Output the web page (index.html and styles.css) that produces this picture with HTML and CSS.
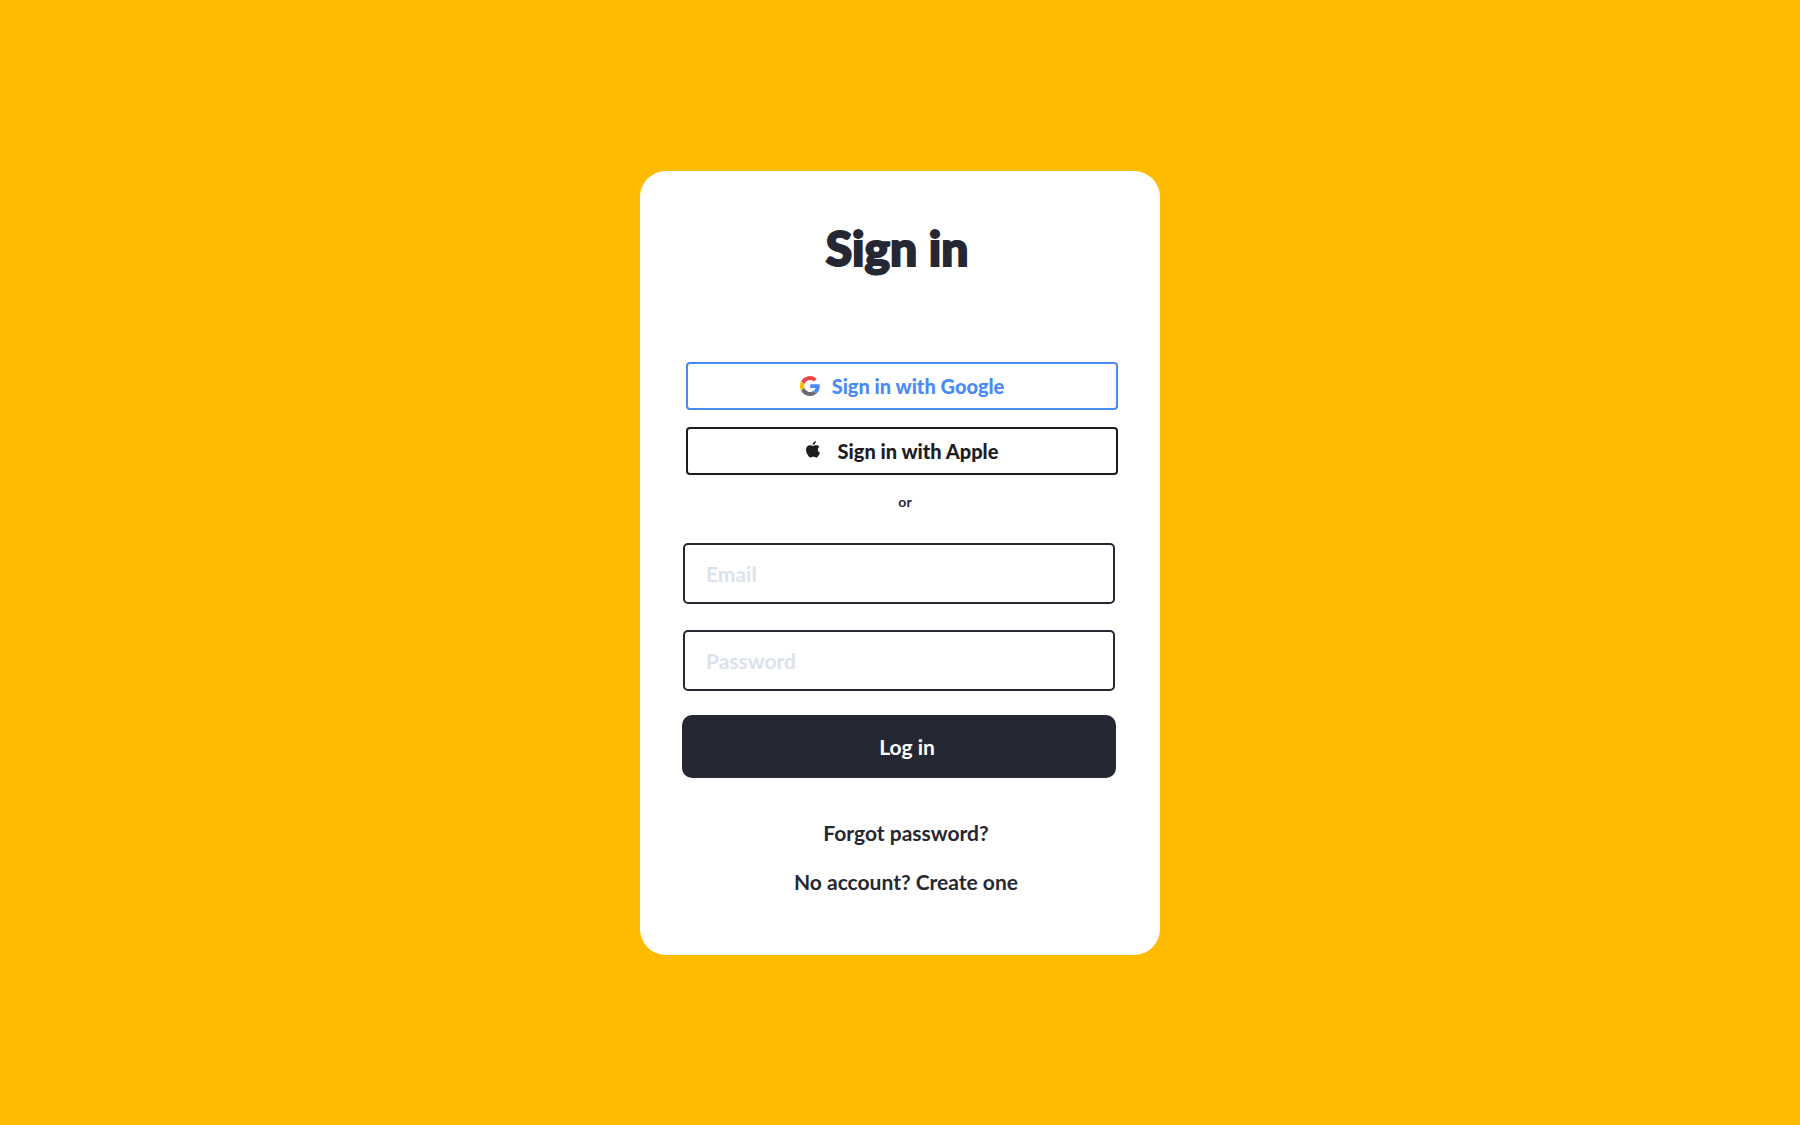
FILE: index.html
```html
<!DOCTYPE html>
<html lang="en">
<head>
  <meta charset="utf-8">
  <meta name="viewport" content="width=device-width, initial-scale=1">
  <title>Sign in</title>
  <link rel="stylesheet" href="styles.css">
</head>
<body>
  <main class="card">
    <h1 class="title">Sign in</h1>
    <div class="social">
      <button type="button" class="provider provider-google">
        <svg class="google-mark" viewBox="0 0 20 20" aria-hidden="true">
          <path fill="#ea4741" d="M1.1 5.5A10 10 0 0 1 16.8 2.7L13.9 5.5A6 6 0 0 0 4.4 8z"/>
          <path fill="#fbbc05" d="M1.1 5.5A10 10 0 0 0 1.1 14.5L4.4 12A6 6 0 0 1 4.4 8z"/>
          <path fill="#686c72" d="M1.1 14.5A10 10 0 0 0 16.6 17.5L13.4 15A6 6 0 0 1 4.4 12z"/>
          <path fill="#4a8af4" d="M10.2 8.2H19.6C20.2 11.8 19.2 15.2 16.6 17.5L13.4 15C14.6 14.2 15.3 13.2 15.5 12H10.2z"/>
        </svg>
        <span>Sign in with Google</span>
      </button>
      <button type="button" class="provider provider-apple">
        <svg class="apple-mark" viewBox="0 0 14 17" aria-hidden="true">
          <path fill="currentColor" d="M9.8 0C9.9 1 9.5 2 8.9 2.7C8.3 3.4 7.5 3.9 6.7 3.8C6.6 2.9 7 2 7.5 1.4C8.1 .6 9 .1 9.8 0zM13.5 5.7C12.5 6.3 11.8 7.2 11.8 8.5C11.8 10.1 12.7 11.1 14 11.6C13.7 12.6 13.2 13.5 12.6 14.4C11.9 15.4 11.2 16.5 10.1 16.5C9 16.5 8.7 15.8 7.4 15.8C6.1 15.8 5.7 16.5 4.7 16.5C3.6 16.5 2.9 15.5 2.1 14.4C.8 12.6 0 10.6 0 8.7C0 5.8 1.9 4.2 3.9 4.2C5.2 4.2 6 4.9 7 4.9C7.8 4.9 9 4.1 10.4 4.2C11.6 4.2 12.8 4.8 13.5 5.7z"/>
        </svg>
        <span>Sign in with Apple</span>
      </button>
      <p class="divider">or</p>
    </div>
    <form class="login">
      <div class="fields">
        <input class="field" type="email" name="email" placeholder="Email" aria-label="Email">
        <input class="field" type="password" name="password" placeholder="Password" aria-label="Password">
      </div>
      <button class="submit" type="submit">Log in</button>
    </form>
    <nav class="links">
      <a href="#forgot">Forgot password?</a>
      <a href="#create">No account? Create one</a>
    </nav>
  </main>
</body>
</html>
```
FILE: styles.css
```css
* {
  box-sizing: border-box;
}

body {
  display: flex;
  align-items: center;
  justify-content: center;
  min-height: 100vh;
  margin: 0;
  padding-top: 1px;
  background: #ffbb00;
  color: #252733;
  font: 700 21px/24px Lato, "Open Sans", sans-serif;
}

.card {
  width: 100%;
  max-width: 520px;
  padding: 47px 45px 61px 43px;
  border-radius: 26px;
  background: #fff;
}

.title {
  margin: 0 4px 84px 0;
  font-size: 48px;
  font-weight: 900;
  line-height: 60px;
  text-align: center;
  -webkit-text-stroke: 2px currentColor;
}

.social {
  display: flex;
  flex-direction: column;
  gap: 17px;
  padding-left: 3px;
  margin-right: -3px;
}

.provider {
  display: flex;
  align-items: center;
  justify-content: center;
  height: 48px;
  padding: 0;
  border: 2px solid currentColor;
  border-radius: 4px;
  background: #fff;
  font: inherit;
  font-size: 20px;
  font-weight: 900;
  cursor: pointer;
}

.provider-google {
  gap: 12px;
  color: #4a8af4;
}

.provider-apple {
  gap: 18px;
  color: #1d1d1f;
}

.google-mark {
  width: 20px;
  height: 20px;
}

.apple-mark {
  width: 14px;
  height: 17px;
  margin-bottom: 3px;
}

.divider {
  margin: 0 0 31px 6px;
  font-size: 14px;
  line-height: 20px;
  text-align: center;
}

.fields {
  display: grid;
  gap: 26px;
}

.field {
  width: 100%;
  height: 61px;
  padding: 0 21px;
  border: 2px solid #252733;
  border-radius: 5px;
  background: #fff;
  color: inherit;
  font: inherit;
}

.field::placeholder {
  color: #dce2ec;
  opacity: 1;
}

.login {
  display: grid;
  gap: 24px;
}

.submit {
  height: 63px;
  margin: 0 -1px;
  padding: 0 0 0 16px;
  border: 0;
  border-radius: 10px;
  background: #252733;
  color: #fff;
  font: inherit;
  cursor: pointer;
}

.links {
  display: flex;
  flex-direction: column;
  align-items: center;
  gap: 25px;
  padding-left: 14px;
  margin-top: 43px;
}

.links a {
  color: inherit;
  text-decoration: none;
}
```
